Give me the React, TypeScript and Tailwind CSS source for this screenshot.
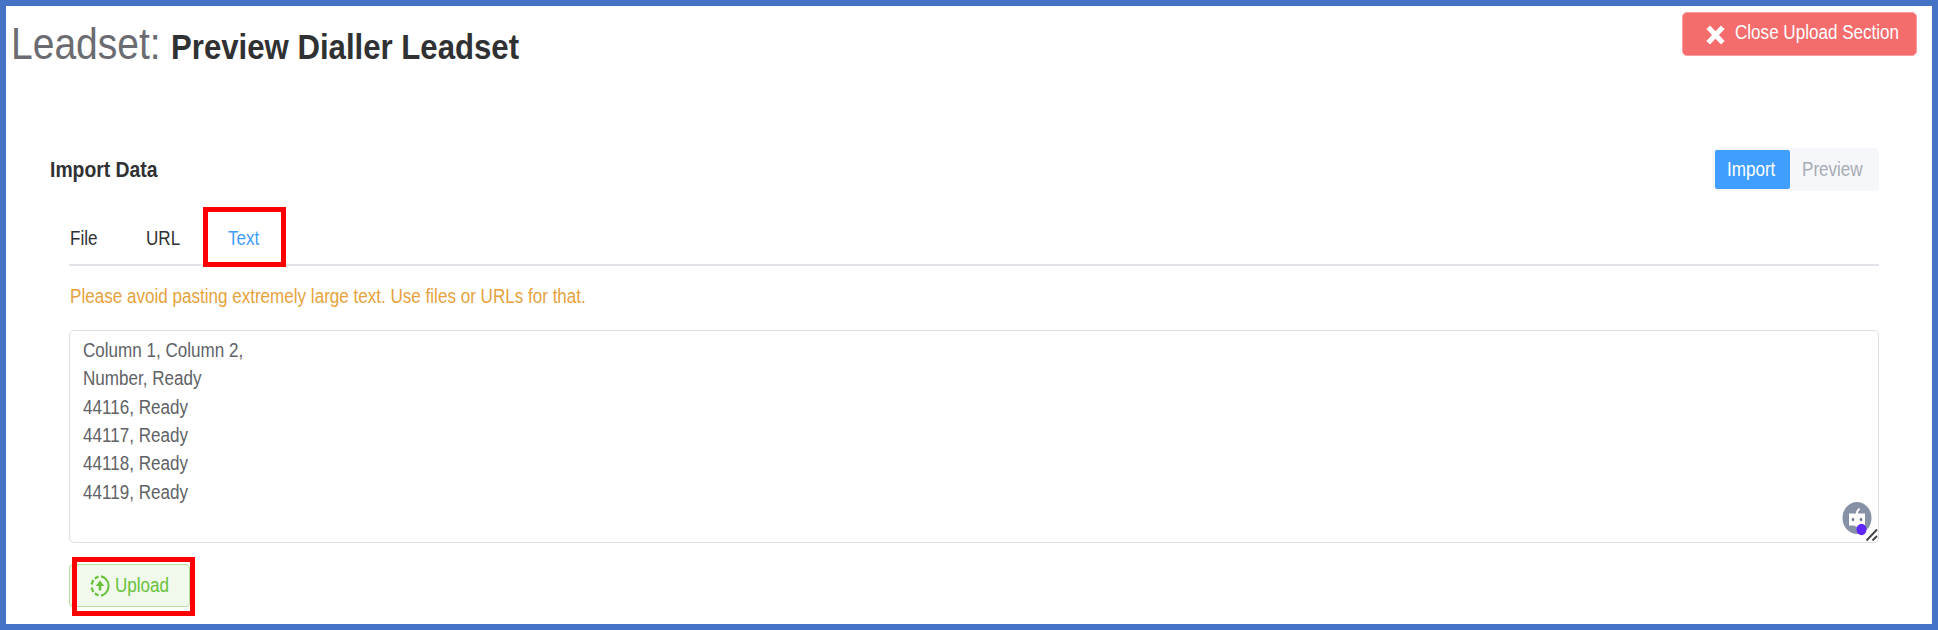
import React from "react";

function T({
  children,
  className = "",
  scale = "scale-x-[0.853]",
}: {
  children: React.ReactNode;
  className?: string;
  scale?: string;
}) {
  return <span className={`block w-max origin-left whitespace-pre ${scale} ${className}`}>{children}</span>;
}

const lines = ["Column 1, Column 2,", "Number, Ready", "44116, Ready", "44117, Ready", "44118, Ready", "44119, Ready"];

export default function App() {
  return (
    <div className="h-[630px] w-[1938px] overflow-hidden border-6 border-[#4472c4] bg-white font-['Liberation_Sans',Arial,sans-serif] text-[20px] leading-7 text-[#303133]">
      <header className="flex h-[142px] items-start justify-between pl-[5px] pr-[15px]">
        <h1 className="flex items-baseline pt-[14px]">
          <span className="w-[160px]">
            <T scale="scale-x-[0.897]" className="text-[43.5px] leading-[48px] text-[#6b6c71]">Leadset:</T>
          </span>
          <T scale="scale-x-[0.89]" className="text-[35px] leading-[48px] font-bold">Preview Dialler Leadset</T>
        </h1>
        <button className="mt-[6px] flex h-[44px] w-[235px] items-center rounded-[5px] border border-[#f89c9c] bg-[#f56c6c] pl-[23px] text-white">
          <svg width="19" height="20" viewBox="0 0 19 20" className="mt-[2px] shrink-0">
            <path d="M2.2 2.2 16.8 17.8M16.8 2.2 2.2 17.8" stroke="white" strokeWidth="5" />
          </svg>
          <T className="-mt-1 ml-[10px]">Close Upload Section</T>
        </button>
      </header>

      <main className="pl-[44px] pr-[53px]">
        <div className="flex h-[43px] items-center justify-between">
          <h2>
            <T scale="scale-x-[0.88]" className="text-[22px] font-bold">Import Data</T>
          </h2>
          <div className="flex h-[43px] w-[167px] items-center rounded-[5px] bg-[#f5f7fa] pl-[3px]">
            <div className="flex h-[39px] w-[75px] items-center rounded-[2px] bg-[#409eff] pl-[12px] text-white">
              <T className="-mt-[2px]">Import</T>
            </div>
            <div className="pl-[12px] text-[#a8abb2]">
              <T className="-mt-[2px]">Preview</T>
            </div>
          </div>
        </div>

        <section className="ml-[19px]">
          <nav className="relative mt-[16px] flex h-[59px] items-center border-b-2 border-[#e0e3ea]">
            <div className="w-[77px] pt-[4px] pl-px"><T>File</T></div>
            <div className="w-[57px] pt-[4px]"><T>URL</T></div>
            <div className="-mb-[3px] flex h-[60px] w-[83px] items-center border-5 border-[#ff0000] pl-[20px] pt-[2px] text-[#409eff]">
              <T>Text</T>
            </div>
          </nav>
          <p className="mt-[16px] pl-px text-[#e6a23c]">
            <T>Please avoid pasting extremely large text. Use files or URLs for that.</T>
          </p>
          <div className="relative mt-[20px] h-[213px] rounded-[5px] border-[1.5px] border-[#dcdfe6] pl-[13px] pt-[5px] text-[#606266]">
            {lines.map((l) => (
              <T key={l} className="leading-[28.35px]">{l}</T>
            ))}
            <svg className="absolute right-0 bottom-0" width="40" height="46" viewBox="0 0 40 46">
              <ellipse cx="19" cy="22" rx="14.5" ry="16" fill="#8791a5" />
              <path d="M19 18.500 19.200 15.500 21.500 12.500" stroke="white" strokeWidth="2" fill="none" />
              <path d="M11 17.500h16v12H22l-3 1.500-3-1.500h-5z" fill="white" />
              <ellipse cx="15" cy="23.500" rx="1.300" ry="1.700" fill="#6f7a92" />
              <ellipse cx="23" cy="23.500" rx="1.300" ry="1.700" fill="#6f7a92" />
              <ellipse cx="23.500" cy="33.500" rx="5" ry="5.700" fill="#5f27ff" />
              <path d="M28.500 44.500 39 33.500M34.500 44.500 39 40" stroke="#444" strokeWidth="1.900" />
            </svg>
          </div>
          <div className="relative mt-[21px] w-[120px]">
            <button className="flex h-[43px] w-[121px] items-center rounded-[4px] border border-[#b3e19d] bg-[#f0f9eb] pl-[20px] text-[#67c23a]">
              <svg className="shrink-0" width="20" height="22" viewBox="0 0 20 22" fill="none" stroke="#67c23a" strokeWidth="2.100">
                <path d="M11 1.400C14 1.800 18.600 5 18.600 11S14 20.200 11 20.600M8.500 1.500 4.800 3.500M3.300 5 1.500 9.500M1.500 12.500 3.300 17M4.800 18.500 8.500 20.500" />
                <path d="M10 15.500V9" strokeWidth="2.600" />
                <path d="M10 5.500 5.800 11h8.400z" fill="#67c23a" stroke="none" />
              </svg>
              <T className="-mt-px ml-[5px]">Upload</T>
            </button>
            <div className="absolute -top-[7px] left-[3px] h-[59px] w-[123px] border-5 border-[#ff0000]" />
          </div>
        </section>
      </main>
    </div>
  );
}
